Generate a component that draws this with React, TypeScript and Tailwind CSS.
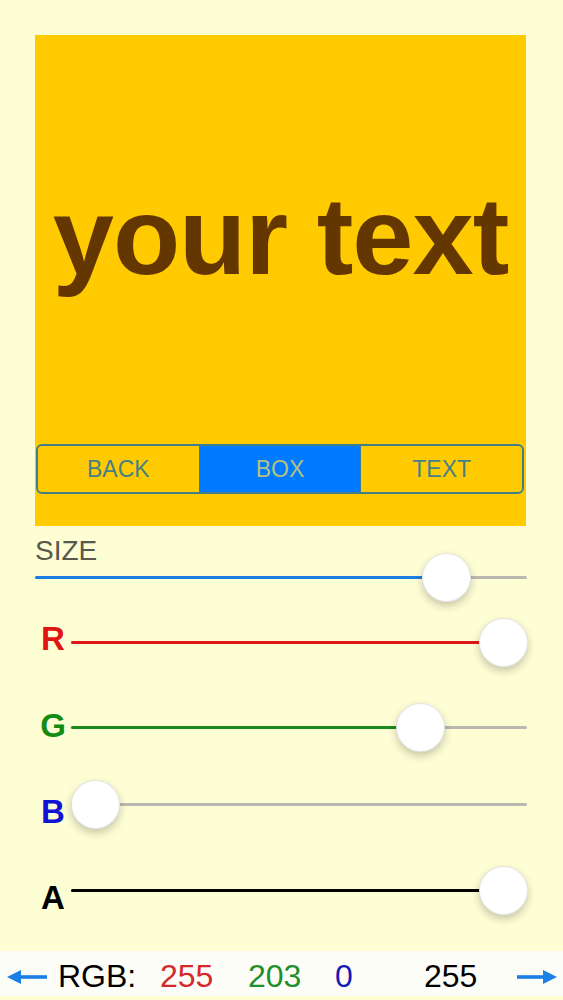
import React from "react";

type SliderProps = {
  value: number;
  fill: string;
};

// plain iOS-looking slider: coloured part up to the thumb, grey after it
function Track({ value, fill }: SliderProps) {
  return (
    <div className="relative flex-1 h-[48px] flex items-center">
      <div className="w-full h-[3px] rounded-full bg-[#b9b9b1] flex">
        <div
          className={`h-full rounded-full ${fill}`}
          style={{ width: `calc(24px + ${value} * (100% - 48px))` }}
        />
      </div>
      <div
        className="absolute top-0 w-[49px] h-[49px] rounded-full bg-white border border-black/10 shadow-[0_4px_8px_rgba(0,0,0,0.22)]"
        style={{ left: `calc(${value} * (100% - 48px))` }}
      />
    </div>
  );
}

function ColorRow({
  label,
  labelColor,
  labelShift,
  fill,
  value,
  rowClass,
}: {
  label: string;
  labelColor: string;
  labelShift: string;
  fill: string;
  value: number;
  rowClass: string;
}) {
  return (
    <div className={`flex items-center h-[60px] ${rowClass}`}>
      <span
        className={`w-[36px] text-center text-[33px] font-bold leading-none ${labelColor} ${labelShift}`}
      >
        {label}
      </span>
      <Track value={value} fill={fill} />
    </div>
  );
}

function LeftArrow() {
  return (
    <svg width="40" height="16" viewBox="0 0 40 16">
      <polygon points="0,8 14,1 14,15" fill="#1b7fe6" />
      <rect x="12" y="6.2" width="28" height="3.6" fill="#1b7fe6" />
    </svg>
  );
}

function RightArrow() {
  return (
    <svg width="40" height="16" viewBox="0 0 40 16">
      <polygon points="40,8 26,1 26,15" fill="#1b7fe6" />
      <rect x="0" y="6.2" width="28" height="3.6" fill="#1b7fe6" />
    </svg>
  );
}

export default function App() {
  return (
    <div
      className="w-[563px] h-[1000px] bg-[#fefed5] flex flex-col overflow-hidden"
      style={{ fontFamily: '"Liberation Sans", Arial, sans-serif' }}
    >
      {/* preview box */}
      <div className="ml-[35px] mt-[35px] w-[491px] h-[491px] bg-[#ffcb00] flex flex-col">
        <div className="flex-1 flex items-center justify-center pb-2">
          <span className="text-[110px] font-bold leading-none text-[#653700] tracking-[-1px]">
            your text
          </span>
        </div>
        <div className="ml-px mr-[2px] h-[50px] flex border-2 border-[#3f7e8a] rounded-[6px] overflow-hidden text-[23px]">
          <button className="flex-1 text-[#467f88] border-r border-[#3f7e8a]">
            BACK
          </button>
          <button className="flex-1 bg-[#007aff] text-[#b3c27e]">BOX</button>
          <button className="flex-1 text-[#467f88] border-l border-[#3f7e8a]">
            TEXT
          </button>
        </div>
        <div className="h-[32px]" />
      </div>

      {/* sliders */}
      <div className="pl-[35px] pr-[36px] flex flex-col">
        <div className="mt-[9px] text-[28px] leading-[32px] text-[#58584f]">
          SIZE
        </div>
        <div className="flex h-[48px] -mt-[14px] -mb-[18px]">
          <Track value={0.872} fill="bg-[#1e7fe6]" />
        </div>
        <ColorRow
          label="R"
          labelColor="text-[#e11414]"
          labelShift="-translate-y-[4px]"
          fill="bg-[#e01818]"
          value={1}
          rowClass="mt-[29px]"
        />
        <ColorRow
          label="G"
          labelColor="text-[#148c14]"
          labelShift="-translate-y-[2px]"
          fill="bg-[#1d8a1d]"
          value={203 / 255}
          rowClass="mt-[25px]"
        />
        <ColorRow
          label="B"
          labelColor="text-[#1212d4]"
          labelShift="translate-y-[7px]"
          fill="bg-[#1212d4]"
          value={0}
          rowClass="mt-[17px]"
        />
        <ColorRow
          label="A"
          labelColor="text-black"
          labelShift="translate-y-[7px]"
          fill="bg-black"
          value={1}
          rowClass="mt-[26px]"
        />
      </div>

      {/* rgb readout */}
      <div className="mt-[31px] h-[45px] pt-[5px] bg-[#fdfdf7] flex items-center text-[32px] leading-none">
        <div className="w-[58px] pl-[7px] flex items-center pt-[2px]">
          <LeftArrow />
        </div>
        <span className="w-[102px] text-black">RGB:</span>
        <span className="w-[88px] text-[#d4282d]">255</span>
        <span className="w-[87px] text-[#1f8f2c]">203</span>
        <span className="w-[89px] text-[#1a1ab4]">0</span>
        <span className="w-[93px] text-black">255</span>
        <div className="flex items-center pt-[2px]">
          <RightArrow />
        </div>
      </div>
    </div>
  );
}
